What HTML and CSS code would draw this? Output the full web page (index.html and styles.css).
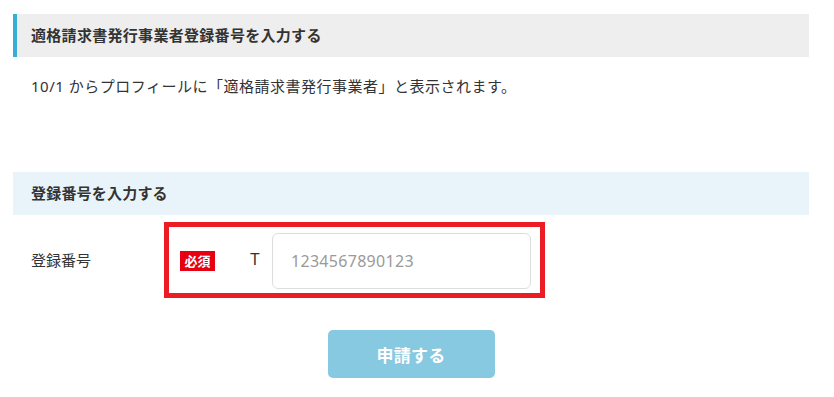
FILE: index.html
```html
<!DOCTYPE html>
<html lang="ja">
<head>
<meta charset="utf-8">
<title>適格請求書発行事業者登録番号を入力する</title>
<link rel="stylesheet" href="styles.css">
</head>
<body>
<div class="page">
  <h2 class="sec-title">適格請求書発行事業者登録番号を入力する</h2>
  <p class="lead">10/1 からプロフィールに「適格請求書発行事業者」と表示されます。</p>
  <h3 class="sub-title">登録番号を入力する</h3>
  <div class="form-row">
    <div class="label">登録番号</div>
    <div class="field">
      <span class="badge">必須</span>
      <span class="prefix">T</span>
      <input class="input" type="text" placeholder="1234567890123">
    </div>
  </div>
  <div class="actions">
    <button class="submit" type="button">申請する</button>
  </div>
</div>
</body>
</html>
```

FILE: styles.css
```css
* { box-sizing: border-box; }

body {
  margin: 0;
  background: #ffffff;
  color: #333333;
  font-family: "Noto Sans", "Noto Sans CJK JP", sans-serif;
  font-size: 15px;
}

.page {
  padding: 14px 25px 0 13px;
}

.sec-title {
  margin: 0;
  height: 43px;
  line-height: 43px;
  padding-left: 14px;
  border-left: 4px solid #37aed6;
  background: #eeeeee;
  font-size: 15px;
  font-weight: bold;
  letter-spacing: 0.3px;
  color: #333333;
}

.lead {
  margin: 17px 0 0;
  padding-left: 18px;
  line-height: 24px;
  font-size: 15px;
  letter-spacing: 0.5px;
}

.sub-title {
  margin: 74px 0 0;
  height: 43px;
  line-height: 43px;
  padding-left: 18px;
  background: #e8f4fa;
  font-size: 15px;
  font-weight: bold;
  letter-spacing: 0.2px;
  color: #333333;
}

.form-row {
  display: flex;
  align-items: center;
  margin-top: 7px;
}

.label {
  width: 151px;
  padding-left: 18px;
  line-height: 24px;
}

.field {
  display: flex;
  align-items: center;
  height: 76px;
  padding: 6px 9px 4px 11px;
  border: 5px solid #ec1c24;
}

.badge {
  display: inline-block;
  width: 35px;
  height: 20px;
  line-height: 20px;
  margin-right: 35px;
  background: #e60012;
  color: #ffffff;
  font-size: 13px;
  font-weight: bold;
  text-align: center;
  font-family: "Noto Sans CJK JP", sans-serif;
}

.prefix {
  width: 22px;
  margin-top: -3px;
  font-family: "Liberation Sans", sans-serif;
  font-size: 16px;
  color: #333333;
}

.input {
  width: 259px;
  height: 56px;
  padding: 0 18px;
  border: 1px solid #dddddd;
  border-radius: 6px;
  font-family: "Noto Sans", sans-serif;
  font-size: 16px;
  letter-spacing: 0.3px;
  color: #333333;
  background: #ffffff;
  outline: none;
}

.input::placeholder {
  color: #9a9a9a;
}

.actions {
  display: flex;
  justify-content: center;
  margin-top: 32px;
}

.submit {
  width: 167px;
  height: 48px;
  border: none;
  border-radius: 5px;
  background: #87c9e1;
  color: #ffffff;
  font-family: "Noto Sans CJK JP", sans-serif;
  font-size: 17px;
  font-weight: bold;
  letter-spacing: 0.3px;
  cursor: pointer;
}
```
